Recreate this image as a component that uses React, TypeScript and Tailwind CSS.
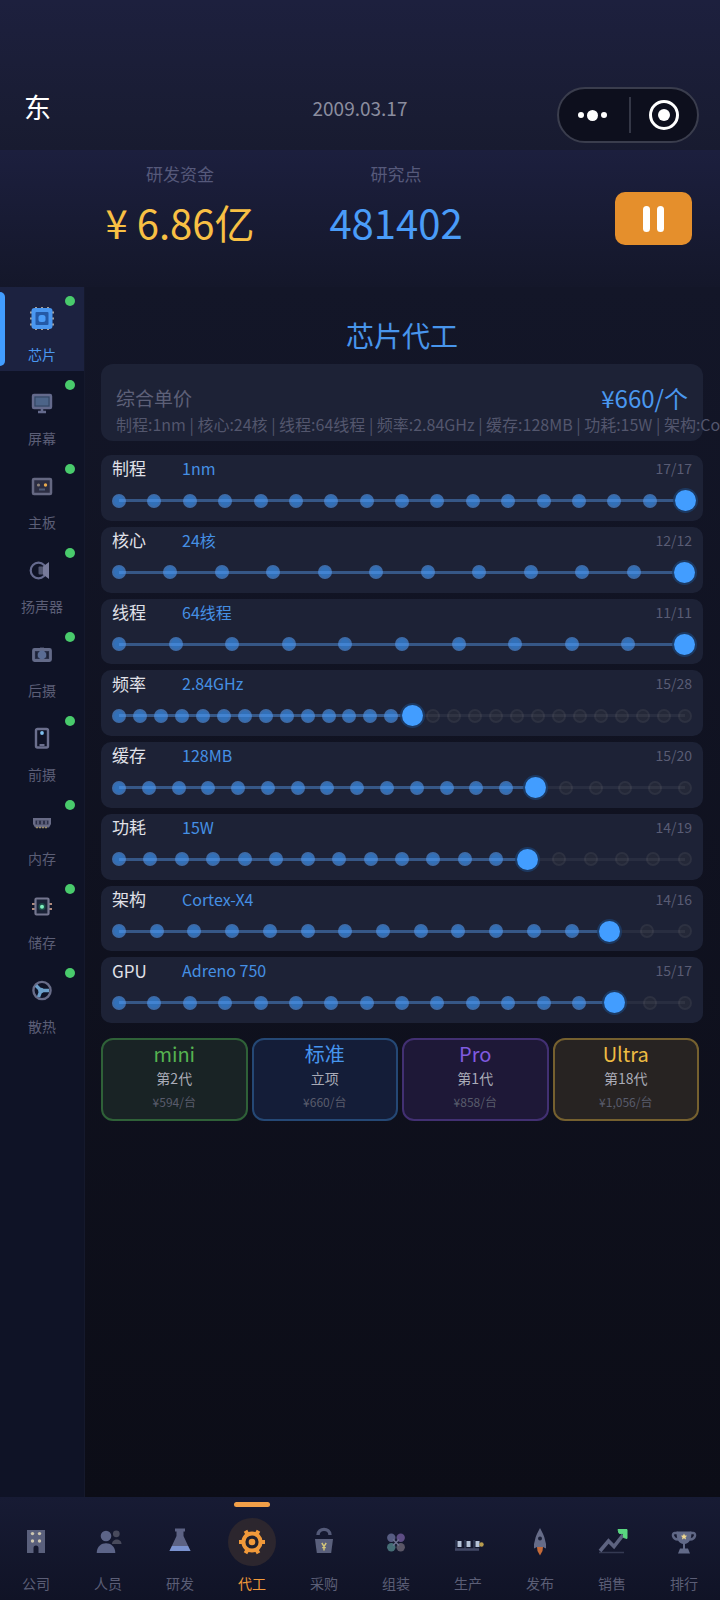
import { useState } from 'react';
import type { ReactNode } from 'react';
import clsx from 'clsx';

const parts = [
  {
    name: '芯片',
    icon: (
      <>
        <path d="M6 0v23M12 0v23M18 0v23M0 5.500h24M0 11.500h24M0 17.500h24" stroke="#a79f96" strokeWidth="2" />
        <rect x="1.500" y="1" width="21" height="21" rx="3" fill="#4a97f0" />
        <rect x="5.500" y="5" width="13" height="13" rx="1" fill="#2459a6" />
        <rect x="8.500" y="8" width="7" height="7" rx="2.500" fill="#4a9cf8" />
      </>
    ),
  },
  {
    name: '屏幕',
    icon: (
      <>
        <rect x="3" y="4" width="18" height="13" rx="1" fill="#4c6488" stroke="#646a8c" strokeWidth="2.4" />
        <rect x="5" y="6" width="14" height="9" fill="none" stroke="#33425f" />
        <path d="M12 18v3M8 21h8" stroke="#646a8c" strokeWidth="2.5" />
      </>
    ),
  },
  {
    name: '主板',
    icon: (
      <>
        <rect x="3" y="4" width="18" height="15" rx="1" fill="#2b2d42" stroke="#656882" strokeWidth="2.5" />
        <circle cx="8.5" cy="10" r="1.6" fill="#8a8078" />
        <circle cx="15.5" cy="10" r="1.7" fill="#e8a94e" />
        <path d="M9 14.5h6" stroke="#4e5a76" strokeWidth="2" />
      </>
    ),
  },
  {
    name: '扬声器',
    icon: (
      <>
        <circle cx="8.5" cy="11.5" r="7.8" fill="none" stroke="#656a8e" strokeWidth="2.2" />
        <rect x="8.5" y="7.5" width="5" height="8" rx="1" fill="#50556f" />
        <path d="M13 7.500l6-4.500v17l-6-4.500z" fill="#777a9a" />
      </>
    ),
  },
  {
    name: '后摄',
    icon: (
      <>
        <rect x="3.5" y="6.5" width="17" height="11" rx="1" fill="#2a3048" stroke="#636a88" strokeWidth="2.8" />
        <circle cx="12" cy="12" r="4.4" fill="#5a6c94" />
        <path d="M10 4.6h4v2h-4z" fill="#636a88" />
        <path d="M6.500 9v6M17.500 9v6" stroke="#1c2238" strokeWidth="1.6" />
      </>
    ),
  },
  {
    name: '前摄',
    icon: (
      <>
        <rect x="6" y="2" width="12" height="18.5" rx="1.5" fill="none" stroke="#6b6f8d" strokeWidth="2.4" />
        <circle cx="12" cy="6" r="1.9" fill="#7fc0ee" />
        <path d="M9.5 18h5" stroke="#6b6f8d" strokeWidth="2" />
      </>
    ),
  },
  {
    name: '内存',
    icon: (
      <>
        <path d="M3 7h18v6l-2 3.500H5L3 13z" fill="#686b86" />
        <path d="M5.500 9.500h13v4h-13z" fill="#2c3048" />
        <path d="M8 9.500v4M12 9.500v4M16 9.500v4" stroke="#686b86" strokeWidth="1.500" />
        <path d="M6 16.500h12" stroke="#9a8c66" strokeWidth="1.6" strokeDasharray="2 1" />
      </>
    ),
  },
  {
    name: '储存',
    icon: (
      <>
        <path d="M2 9h4M2 14h4M18 9h4M18 14h4" stroke="#b08a7c" strokeWidth="2" />
        <rect x="5.5" y="3.5" width="13" height="16" rx="1" fill="#1a2236" stroke="#74768f" strokeWidth="2.2" />
        <circle cx="12" cy="11.7" r="3.6" fill="#1d4a48" />
        <circle cx="12" cy="11.7" r="2" fill="#7df0bd" />
      </>
    ),
  },
  {
    name: '散热',
    icon: (
      <>
        <circle cx="12" cy="11.5" r="8.6" fill="none" stroke="#686c88" strokeWidth="2.4" />
        <path d="M11 11.5L6 6.500M11 11.5h8M11 11.5L8.500 18" stroke="#6c9fca" strokeWidth="3.4" />
        <circle cx="11" cy="11.5" r="2.8" fill="#6c9fca" />
      </>
    ),
  },
];

const specs = [
  { name: '制程', value: '1nm', level: 17, max: 17 },
  { name: '核心', value: '24核', level: 12, max: 12 },
  { name: '线程', value: '64线程', level: 11, max: 11 },
  { name: '频率', value: '2.84GHz', level: 15, max: 28 },
  { name: '缓存', value: '128MB', level: 15, max: 20 },
  { name: '功耗', value: '15W', level: 14, max: 19 },
  { name: '架构', value: 'Cortex-X4', level: 14, max: 16 },
  { name: 'GPU', value: 'Adreno 750', level: 15, max: 17 },
];

const models = [
  { name: 'mini', gen: '第2代', price: '¥594/台', box: 'border-[#2f6138] bg-[#192325]', text: 'text-[#56b351]' },
  { name: '标准', gen: '立项', price: '¥660/台', box: 'border-[#254875] bg-[#141d38]', text: 'text-[#4695ee]' },
  { name: 'Pro', gen: '第1代', price: '¥858/台', box: 'border-[#423072] bg-[#1e1837]', text: 'text-[#805be0]' },
  { name: 'Ultra', gen: '第18代', price: '¥1,056/台', box: 'border-[#75602f] bg-[#272322]', text: 'text-[#eebc43]' },
];

const tabs = [
  {
    name: '公司',
    icon: (
      <>
        <path d="M3 0h18v23h-6.5v-5a2.5 2.5 0 0 0-5 0v5H3z" fill="#5a607c" />
        <g fill="#cdc6b0">
          <circle cx="8.5" cy="3.6" r="1.7" />
          <circle cx="15.5" cy="3.6" r="1.7" />
          <circle cx="8.5" cy="11" r="1.7" />
          <circle cx="15.5" cy="11" r="1.7" />
        </g>
      </>
    ),
  },
  {
    name: '人员',
    icon: (
      <>
        <circle cx="20.3" cy="3.8" r="3.4" fill="#484a5c" />
        <path d="M16 14c0-6 9.5-6 9.5 0z" fill="#484a5c" />
        <circle cx="10" cy="6" r="5.3" fill="#5c6488" />
        <path d="M.7 23c0-13 18.6-13 18.6 0z" fill="#5c6488" />
      </>
    ),
  },
  {
    name: '研发',
    icon: (
      <>
        <path d="M7 -1.5h10v3h-1.5v4.5L22.5 21h-21L8.5 6V1.5H7z" fill="#5c6284" />
        <path d="M4 16h16l2.5 5h-21z" fill="#7a92d0" />
      </>
    ),
  },
  {
    name: '代工',
    icon: (
      <>
        <path
          d="M-1 12h26M5.500 .8l13 22.400M18.500 .8l-13 22.400"
          stroke="#f0993a"
          strokeWidth="4"
        />
        <circle cx="12" cy="12" r="8.6" fill="#20202c" stroke="#f0993a" strokeWidth="4" />
        <circle cx="12" cy="12" r="3.3" fill="#f0993a" />
      </>
    ),
  },
  {
    name: '采购',
    icon: (
      <>
        <path d="M6 5C6-2.500 18-2.500 18 5" fill="none" stroke="#545a78" strokeWidth="3.4" />
        <path d="M3 9h18l-1.8 14H4.8z" fill="#5a607c" />
        <path d="M9.8 13l2.2 3.4 2.2-3.4M12 16v4.4M10.2 17.6h3.6" fill="none" stroke="#d6c878" strokeWidth="1.4" />
      </>
    ),
  },
  {
    name: '组装',
    icon: (
      <>
        <circle cx="7.3" cy="7.7" r="4.2" fill="#565c82" />
        <circle cx="16.7" cy="7.7" r="4.2" fill="#5d4d84" />
        <circle cx="7.3" cy="17.3" r="4.2" fill="#456e76" />
        <circle cx="16.7" cy="17.3" r="4.2" fill="#5a5666" />
        <path d="M9 9.5l6 6M15 9.5l-6 6" stroke="#6d7190" strokeWidth="1.5" />
      </>
    ),
  },
  {
    name: '生产',
    icon: (
      <>
        <path d="M0 10v10M9 10v10M18 10v10" stroke="#2f3a56" strokeWidth="1.500" />
        <path d="M-1 19.5h24" stroke="#414764" strokeWidth="2.600" />
        <path d="M1.500 11h4v6h-4zM10.500 11h4v6h-4zM19.500 11h4v6h-4z" fill="#b4c2d8" />
        <circle cx="25.5" cy="14.5" r="2.2" fill="#b89c4e" />
      </>
    ),
  },
  {
    name: '发布',
    icon: (
      <>
        <path d="M9 17h6l-.5 4-2.500 4.500L9.500 21z" fill="#c56a38" />
        <path d="M12-2c2 4 4.500 8 5 12l1 4v4.500L15 17H9l-3 1.500V14l1-4c.5-4 3-8 5-12z" fill="#666c88" />
        <circle cx="12" cy="8.500" r="2" fill="#1b2038" />
      </>
    ),
  },
  {
    name: '销售',
    icon: (
      <>
        <path d="M-1 22.500h25" stroke="#343952" strokeWidth="1.500" />
        <path d="M0 21l8.500-10 5.500 5.500L23 5" fill="none" stroke="#5d6380" strokeWidth="3.600" />
        <path d="M18-.5h9v9l-3.500-1V4l-4.500-.8z" fill="#5ad680" stroke="#5ad680" />
      </>
    ),
  },
  {
    name: '排行',
    icon: (
      <>
        <path d="M6 3H2.500C0 3 0 9 6 9.500M18 3h3.500C24 3 24 9 18 9.500" fill="none" stroke="#5e6684" strokeWidth="2.400" />
        <path d="M4.500 1.500h15c0 8-2 11.500-6.500 12.500v4.500h3l2 5H6l2-5h3V14c-4.500-1-6.500-4.500-6.500-12.500z" fill="#626a88" />
        <path d="M12 3.500l.9 2 2.200.2-1.600 1.500.5 2.200-2-1.200-2 1.200.5-2.200-1.600-1.500 2.200-.2z" fill="#f0d890" />
      </>
    ),
  },
];

function Icon({ children }: { children: ReactNode }) {
  return (
    <svg viewBox="0 0 24 24" className="h-6 w-6 overflow-visible" aria-hidden="true">
      {children}
    </svg>
  );
}

function SpecRow({ name, value, level, max }: (typeof specs)[number]) {
  const [current, setCurrent] = useState(level);
  const id = `spec-${name}`;

  return (
    <div className="rounded-[10px] bg-[#1d2236] px-[11px] pb-2">
      <div className="flex h-[26px] items-center">
        <label htmlFor={id} className="w-[70px] text-[17px] text-[#e0e1e8]">{name}</label>
        <span className="text-base text-[#4590e4]">{value}</span>
        <span className="ml-auto text-sm text-[#595c74]">{current}/{max}</span>
      </div>
      <div className="relative mt-2 flex h-[23px] items-center justify-between">
        {Array.from({ length: max }, (_, i) => (
          <span key={i} className="flex h-[14px] w-[14px] items-center justify-center">
            {i + 1 === current ? (
              <span className="z-10 h-[21px] w-[21px] shrink-0 rounded-full bg-[#429dff] ring-2 ring-[#1d3f6c]/80" />
            ) : (
              <span
                className={clsx(
                  'h-[14px] w-[14px] rounded-full border-2',
                  i + 1 < current ? 'border-[#3d6ba8] bg-[#3270b8]' : 'border-[#2d3141] bg-[#242838]'
                )}
              />
            )}
          </span>
        ))}
        <div className="absolute inset-x-[7px] top-[10px] h-[3px] bg-white/5">
          <div
            className="h-full bg-[#4a96f0]/40"
            style={{ width: `${((current - 1) / (max - 1)) * 100}%` }}
          />
        </div>
        <input
          id={id}
          type="range"
          min={1}
          max={max}
          value={current}
          onChange={(e) => setCurrent(Number(e.target.value))}
          className="absolute inset-0 z-20 h-full w-full cursor-pointer opacity-0"
        />
      </div>
    </div>
  );
}

export default function App() {
  const [part, setPart] = useState('芯片');
  const [tab, setTab] = useState('代工');

  return (
    <div className="flex min-h-screen flex-col bg-[#0d0f1b] font-['Noto_Sans_CJK_SC',sans-serif] text-white">
      <header className="grid grid-cols-3 items-start bg-linear-to-b from-[#1d203e] to-[#181b30] pt-[87px] pb-[7px]">
        <div className="flex h-10 items-center pl-6 text-[27px]">东</div>
        <time className="flex h-[42px] items-center justify-center text-[19px] text-[#8b8d9f]">2009.03.17</time>
        <div className="mr-[21px] flex h-14 w-[142px] items-center justify-self-end rounded-full border-2 border-[#3a3d4d] bg-[#0d0f1d]">
          <button aria-label="更多" className="flex flex-1 items-center justify-center gap-[3px] pr-1">
            <span className="h-[6px] w-[6px] rounded-full bg-white" />
            <span className="h-[11px] w-[11px] rounded-full bg-white" />
            <span className="h-[6px] w-[6px] rounded-full bg-white" />
          </button>
          <span className="h-9 w-[2px] bg-[#343746]" />
          <button aria-label="关闭" className="flex flex-1 items-center justify-center">
            <span className="flex h-[30px] w-[30px] items-center justify-center rounded-full border-3 border-white">
              <span className="h-3 w-3 rounded-full bg-white" />
            </span>
          </button>
        </div>
      </header>

      <section className="flex bg-linear-to-b from-[#1c1f3e] to-[#14172a] pt-3 pb-[41px] pl-[10%]">
        <div className="w-1/3 text-center">
          <div className="text-[17px] leading-6 text-[#56597a]">研发资金</div>
          <div className="mt-3 text-[40px] leading-12 whitespace-nowrap text-[#f8c044]">¥ 6.86亿</div>
        </div>
        <div className="w-1/3 text-center">
          <div className="text-[17px] leading-6 text-[#56597a]">研究点</div>
          <div className="mt-3 text-[40px] leading-12 text-[#4a9cf8]">481402</div>
        </div>
        <button
          aria-label="暂停"
          className="mt-[30px] mr-7 ml-auto flex h-[53px] w-[77px] items-center justify-center gap-[7px] rounded-[10px] bg-[#e58f2c]"
        >
          <span className="h-[26px] w-[7px] rounded-full bg-white" />
          <span className="h-[26px] w-[7px] rounded-full bg-white" />
        </button>
      </section>

      <div className="flex flex-1">
        <nav className="w-[85px] shrink-0 border-r border-[#15192c] bg-[#0f1326]">
          {parts.map((p) => {
            const active = p.name === part;
            return (
              <button
                key={p.name}
                onClick={() => setPart(p.name)}
                className={clsx(
                  'relative flex h-[84px] w-full flex-col items-center pt-5 text-sm',
                  active ? 'bg-[#1c2240] text-[#4a98f0]' : 'text-[#5b5e76]'
                )}
              >
                {active && <span className="absolute inset-y-[5px] left-0 w-[5px] rounded-r-full bg-[#429dff]" />}
                <span className="absolute top-[9px] right-[9px] h-[10px] w-[10px] rounded-full bg-[#49cb6c]" />
                <Icon>{p.icon}</Icon>
                <span className="mt-[13px]">{p.name}</span>
              </button>
            );
          })}
        </nav>

        <main className="min-w-0 flex-1 overflow-hidden bg-linear-to-b from-[#131628] to-[#0c0d17] pr-[17px] pl-4">
          <h1 className="mt-7 text-center text-[28px] leading-10 text-[#4895ec]">芯片代工</h1>

          <div className="mt-[9px] rounded-xl bg-[#1d2236] px-[15px] pt-5 pb-[5px]">
            <div className="flex items-center justify-between leading-7">
              <span className="text-[19px] text-[#5d6078]">综合单价</span>
              <span className="text-2xl leading-7 text-[#4a98f0]">¥660/个</span>
            </div>
            <p className="text-base leading-6 whitespace-nowrap text-[#53566d]">
              {specs.map((s) => `${s.name}:${s.value}`).join(' | ')}
            </p>
          </div>

          <div className="mt-[14px] grid min-h-[568px] auto-rows-fr gap-[6px]">
            {specs.map((s) => (
              <SpecRow key={s.name} {...s} />
            ))}
          </div>

          <div className="mt-[15px] grid grid-cols-4 gap-1 pr-1">
            {models.map((m) => (
              <button
                key={m.name}
                className={clsx('flex flex-col items-center rounded-xl border-2 pb-[7px]', m.box)}
              >
                <span className={clsx('text-xl leading-7', m.text)}>{m.name}</span>
                <span className="text-sm leading-5 text-[#a9abb7]">{m.gen}</span>
                <span className="mt-1 text-xs leading-5 text-[#595c6c]">{m.price}</span>
              </button>
            ))}
          </div>
        </main>
      </div>

      <nav className="grid grid-cols-10 bg-linear-to-b from-[#171b34] to-[#101326]">
        {tabs.map((t) => {
          const active = t.name === tab;
          return (
            <button
              key={t.name}
              onClick={() => setTab(t.name)}
              className={clsx(
                'relative flex flex-col items-center pt-[21px] pb-[7px] text-sm',
                active ? 'text-[#f0993a]' : 'text-[#5b5e76]'
              )}
            >
              {active && <span className="absolute top-[5px] h-[5px] w-9 rounded-full bg-[#f2a048]" />}
              <span className={clsx('flex h-12 w-12 items-center justify-center rounded-full', active && 'bg-[#2c262e]')}>
                <Icon>{t.icon}</Icon>
              </span>
              <span className="mt-[7px]">{t.name}</span>
            </button>
          );
        })}
      </nav>
    </div>
  );
}
